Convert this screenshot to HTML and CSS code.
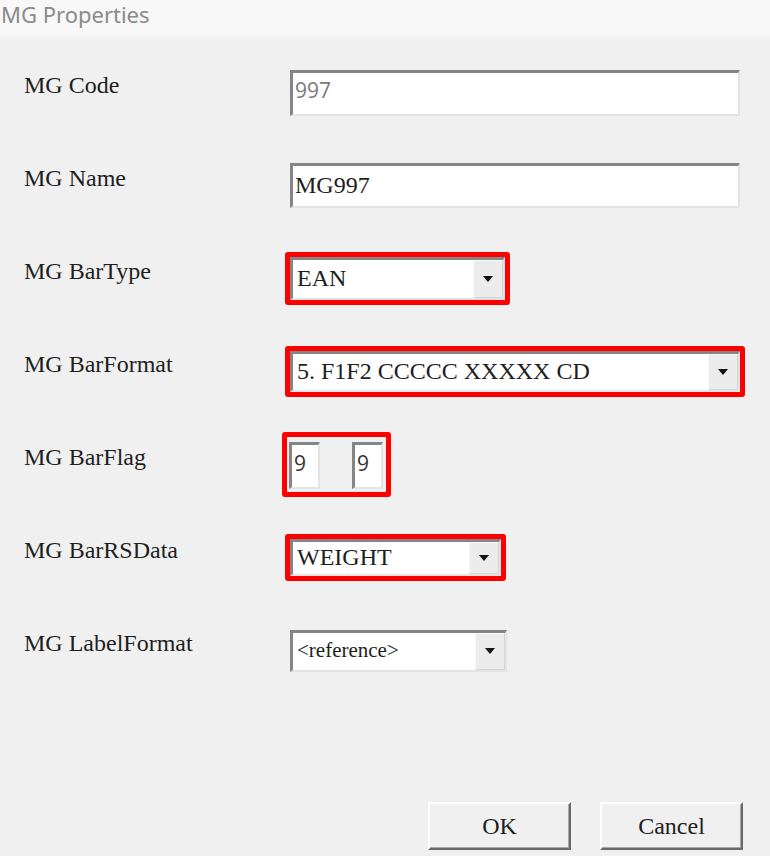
FILE: index.html
```html
<!DOCTYPE html>
<html>
<head>
    <title>MG Properties</title>
    <link rel="stylesheet" href="styles.css">
</head>
<body>
    <div class="titlebar">MG Properties</div>

    <div class="form">
        <div class="row">
            <div class="label">MG Code</div>
            <div class="field field-wide field-code disabled">997</div>
        </div>

        <div class="row">
            <div class="label">MG Name</div>
            <div class="field field-wide field-name">MG997</div>
        </div>

        <div class="row">
            <div class="label">MG BarType</div>
            <div class="mark">
                <div class="field combo combo-type">
                    <span class="value">EAN</span>
                    <span class="drop"><i class="arrow"></i></span>
                </div>
            </div>
        </div>

        <div class="row">
            <div class="label">MG BarFormat</div>
            <div class="mark">
                <div class="field combo combo-format">
                    <span class="value">5. F1F2 CCCCC XXXXX CD</span>
                    <span class="drop"><i class="arrow"></i></span>
                </div>
            </div>
        </div>

        <div class="row">
            <div class="label">MG BarFlag</div>
            <div class="mark mark-flag">
                <div class="field field-flag">9</div>
                <div class="field field-flag">9</div>
            </div>
        </div>

        <div class="row">
            <div class="label">MG BarRSData</div>
            <div class="mark">
                <div class="field combo combo-rs">
                    <span class="value">WEIGHT</span>
                    <span class="drop"><i class="arrow"></i></span>
                </div>
            </div>
        </div>

        <div class="row">
            <div class="label">MG LabelFormat</div>
            <div class="field combo combo-label">
                <span class="value">&lt;reference&gt;</span>
                <span class="drop"><i class="arrow"></i></span>
            </div>
        </div>
    </div>

    <div class="buttons">
        <button class="btn">OK</button>
        <button class="btn">Cancel</button>
    </div>
</body>
</html>
```

FILE: styles.css
```css
body {
    margin: 0;
    width: 770px;
    height: 856px;
    overflow: hidden;
    background-color: #f0f0f0;
    font-family: "Liberation Serif", "Tinos", "Times New Roman", "DejaVu Serif", serif;
    font-size: 24px;
    color: #1e1e1e;
}
.titlebar {
    box-sizing: border-box;
    height: 40px;
    padding-left: 1px;
    padding-top: 1px;
    background: linear-gradient(#f8f8f8 80%, #f0f0f0);
    font-family: "Noto Sans", "Open Sans", sans-serif;
    font-size: 22px;
    line-height: 26px;
    color: #8a8a8a;
}
.form {
    padding-top: 6px;
    padding-left: 24px;
}
.row {
    display: flex;
    align-items: center;
    height: 93px;
}
.label {
    width: 266px;
    line-height: 28px;
    margin-bottom: 16px;
}
.field {
    box-sizing: border-box;
    display: flex;
    align-items: center;
    background-color: #fff;
    border-top: 3px solid #858585;
    border-left: 3px solid #858585;
    border-right: 2px solid #e4e4e4;
    border-bottom: 2px solid #e4e4e4;
    padding: 0 0 2px 2px;
    line-height: 28px;
    white-space: nowrap;
}
.field-wide {
    width: 450px;
}
.field-code {
    height: 46px;
}
.field-name {
    height: 45px;
}
.disabled {
    color: #7a7a7a;
    font-family: "Open Sans", "Noto Sans", sans-serif;
    font-size: 21px;
    padding-bottom: 6px;
}
.mark {
    display: flex;
    border: 5px solid #fe0000;
    border-radius: 3px;
    margin-left: -5px;
}
.mark-flag {
    gap: 32px;
    padding: 5px 3px 3px 2px;
    margin-left: -8px;
}
.field-flag {
    width: 31px;
    height: 47px;
    padding-bottom: 6px;
    font-family: "Open Sans", "Noto Sans", sans-serif;
    font-size: 21px;
    color: #333;
}
.combo {
    padding: 0;
    align-items: stretch;
}
.combo .value {
    flex: 1;
    display: flex;
    align-items: center;
    padding-left: 4px;
    padding-bottom: 2px;
}
.combo .drop {
    width: 30px;
    display: flex;
    align-items: center;
    justify-content: center;
    background-color: #ececec;
    border-top: 1px solid #f9f9f9;
    border-left: 1px solid #f9f9f9;
    border-right: 1px solid #d4d4d4;
    border-bottom: 1px solid #d4d4d4;
    box-sizing: border-box;
}
.arrow {
    width: 0;
    height: 0;
    border-left: 5px solid transparent;
    border-right: 5px solid transparent;
    border-top: 6px solid #111;
}
.combo-type {
    width: 215px;
    height: 43px;
}
.combo-format {
    width: 450px;
    height: 41px;
}
.combo-rs {
    width: 211px;
    height: 37px;
}
.combo-label {
    width: 217px;
    height: 42px;
    font-size: 21px;
}
.buttons {
    display: flex;
    justify-content: flex-end;
    gap: 29px;
    padding-right: 27px;
    margin-top: 105px;
}
.btn {
    width: 143px;
    height: 48px;
    background-color: #f0f0f0;
    border-top: 2px solid #fff;
    border-left: 2px solid #fff;
    border-right: 2px solid #6a6a6a;
    border-bottom: 2px solid #6a6a6a;
    box-shadow: inset -1px -1px 0 #a8a8a8;
    font-family: "Liberation Serif", "Tinos", "Times New Roman", "DejaVu Serif", serif;
    font-size: 24px;
    color: #1e1e1e;
    padding: 0;
}
```
